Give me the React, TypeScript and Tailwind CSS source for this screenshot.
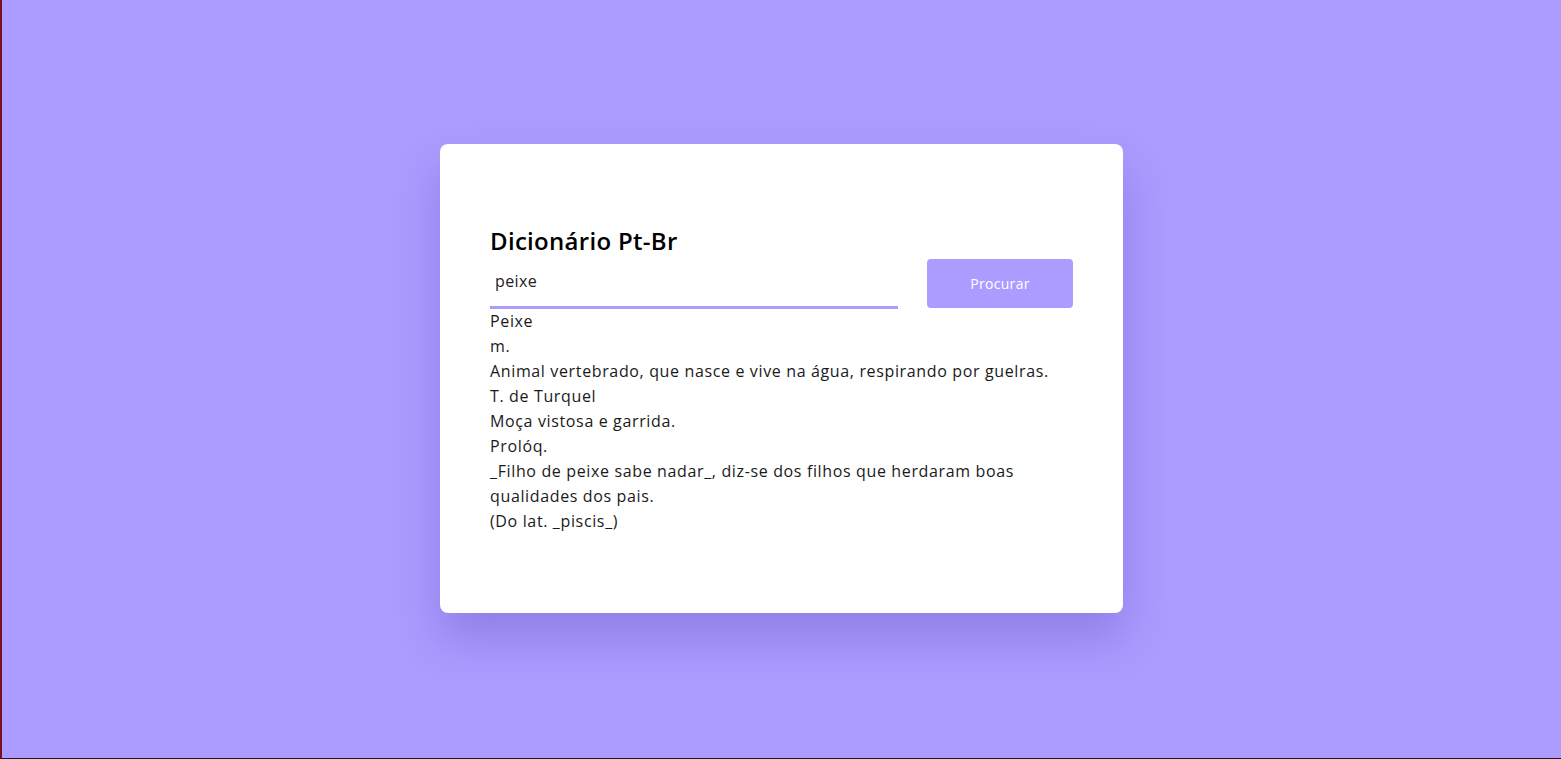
import React from 'react';

const App: React.FC = () => {
  const lines = [
    'Peixe',
    'm.',
    'Animal vertebrado, que nasce e vive na água, respirando por guelras.',
    'T. de Turquel',
    'Moça vistosa e garrida.',
    'Prolóq.',
    '_Filho de peixe sabe nadar_, diz-se dos filhos que herdaram boas qualidades dos pais.',
    '(Do lat. _piscis_)',
  ];

  return (
    <div className="h-[759px] w-full bg-[#ac9cff] border-l-2 border-l-[#7a1020] border-b border-b-[#1c1530] pb-[2px] flex items-center justify-center font-['Open_Sans',sans-serif]">
      <div className="w-[683px] h-[469px] bg-white rounded-lg px-[50px] pt-[79px] shadow-[0_25px_45px_rgba(60,40,160,0.25)]">
        <h1 className="text-[24px] leading-[36px] font-semibold tracking-[0.3px] text-black">Dicionário Pt-Br</h1>
        <div className="flex items-start gap-[29px]">
          <input
            defaultValue="peixe"
            className="w-[408px] h-[50px] px-[5px] pb-[2px] text-[16px] tracking-[0.4px] text-[#222] border-b-[3px] border-[#ac9cff] outline-none"
          />
          <button className="w-[146px] h-[49px] rounded bg-[#ac9cff] text-white text-[14px] tracking-[0.3px]">Procurar</button>
        </div>
        <div className="text-[16px] leading-[25px] tracking-[0.64px] text-[#1a1a1a]">
          {lines.map((l, i) => (
            <p key={i}>{l}</p>
          ))}
        </div>
      </div>
    </div>
  );
};

export default App;
